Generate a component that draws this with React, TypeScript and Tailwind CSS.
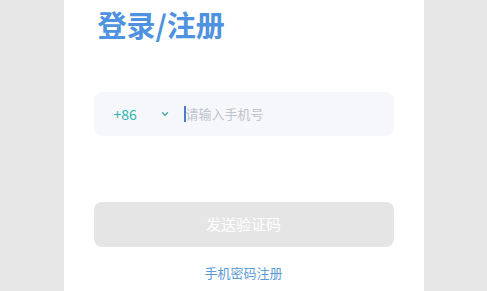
import React from 'react';

const font = { fontFamily: '"Noto Sans CJK SC", "Noto Sans", sans-serif' };

export default function App() {
  return (
    <div className="w-full h-[291px] bg-[#e6e6e6] flex justify-center overflow-hidden" style={font}>
      <div className="w-[360px] h-full bg-white px-[30px] flex flex-col">
        <h1 className="mt-[4px] ml-[4px] text-[29px] leading-[40px] font-bold text-[#4e92e0]">登录/注册</h1>

        <div className="mt-[48px] h-[44px] rounded-[8px] bg-[#f5f7fa] flex items-center pl-[20px]">
          <span className="text-[14px] text-[#2bb5b0] w-[34px]">+86</span>
          <svg className="ml-[13px] text-[#4fa3a8]" width="8" height="6" viewBox="0 0 8 6" fill="none">
            <path d="M1.5 1.8 L4 4.2 L6.5 1.8" stroke="currentColor" strokeWidth="1.4" strokeLinecap="round" strokeLinejoin="round" />
          </svg>
          <span className="ml-[15px] w-[2px] h-[16px] bg-[#4a7bd0]" />
          <span className="text-[13px] text-[#c0c4cc]">请输入手机号</span>
        </div>

        <button className="mt-[66px] h-[45px] rounded-[8px] bg-[#e5e5e5] text-white text-[15px]">
          发送验证码
        </button>

        <div className="mt-[16px] text-center text-[13px] text-[#5b9bd5]">手机密码注册</div>
      </div>
    </div>
  );
}
